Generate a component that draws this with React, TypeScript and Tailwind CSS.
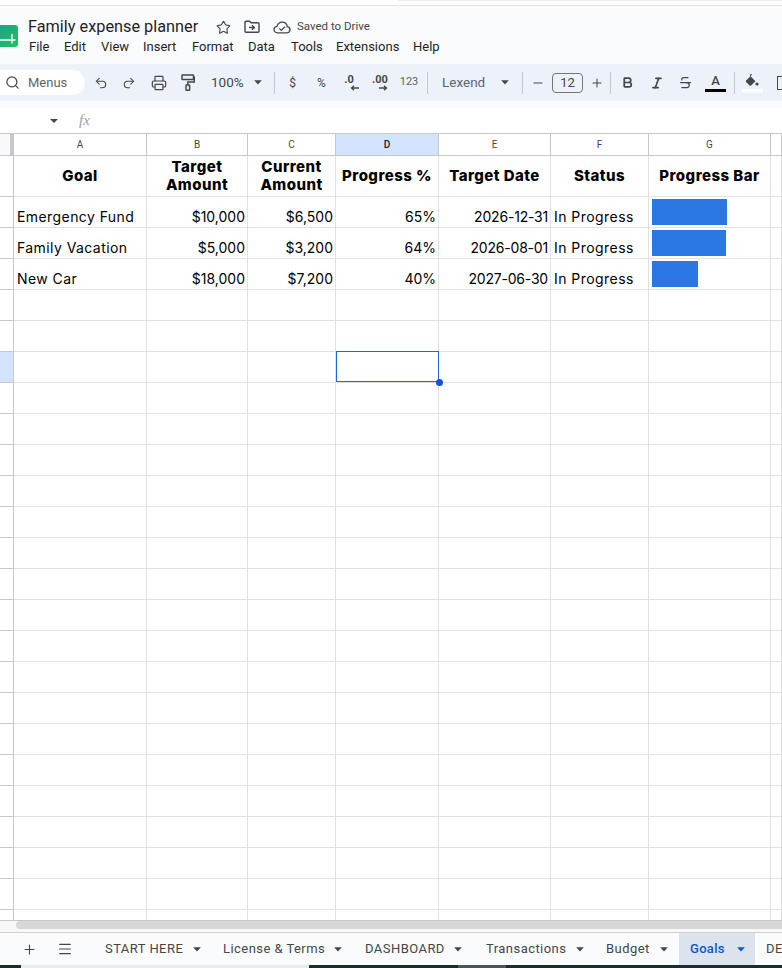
import React from "react";
import { Search, Undo2, Redo2, Printer, Star, Plus, Minus, Menu, Bold, Italic, Strikethrough } from "lucide-react";

const UI = "font-['Roboto','Liberation_Sans',sans-serif]";
const SHEET = "font-['Inter','Noto_Sans',sans-serif]";

const menus: [string, number][] = [
  ["File", 35], ["Edit", 37], ["View", 42], ["Insert", 49], ["Format", 56],
  ["Data", 43], ["Tools", 45], ["Extensions", 77], ["Help", 40],
];

const cols = "grid grid-cols-[14px_133px_101px_88px_103px_112px_98px_122px_1fr]";
const Caret = ({ c = "#444746" }: { c?: string }) => (
  <svg width="10" height="5" viewBox="0 0 10 5" className="shrink-0"><path d="M1.200 .3h7.600L5 4.500z" fill={c} /></svg>
);
const Sep = () => <div className="w-px h-[22px] bg-[#c7c7c7] shrink-0" />;
const Slot = ({ w, children, ml = 0 }: { w: number; children?: React.ReactNode; ml?: number }) => (
  <div className="flex items-center justify-center shrink-0 h-full" style={{ width: w, marginLeft: ml }}>{children}</div>
);

function Logo() {
  return (
    <svg width="18" height="22" viewBox="0 0 18 22" className="shrink-0">
      <defs>
        <linearGradient id="g" x1="0" y1="0" x2="1" y2="1">
          <stop offset="0" stopColor="#1f9f8f" />
          <stop offset="1" stopColor="#1fc25e" />
        </linearGradient>
      </defs>
      <path d="M-4 0H15a3 3 0 0 1 3 3V19a3 3 0 0 1-3 3H-4z" fill="url(#g)" />
      <path d="M0 15H15.500M12 9V18.500" stroke="#fff" strokeWidth="1.300" fill="none" />
    </svg>
  );
}

function MoveFolder() {
  return (
    <svg width="16" height="14" viewBox="0 0 16 14" fill="none" stroke="#444746" strokeWidth="1.400">
      <path d="M1 2.200c0-.6.4-1 1-1h3.600l1.500 1.600H14c.6 0 1 .4 1 1v7.400c0 .6-.4 1-1 1H2c-.6 0-1-.4-1-1z" />
      <path d="M5 7.500h5M8 5.200l2.400 2.300L8 9.800" />
    </svg>
  );
}

function CloudCheck() {
  return (
    <svg width="18" height="13" viewBox="0 0 18 13" fill="none" stroke="#444746" strokeWidth="1.300">
      <path d="M4.600 11.800C2.400 11.800 1 10.400 1 8.600c0-1.700 1.300-3 3-3.200C4.800 3 6.800 1.200 9.200 1.200c2.700 0 4.700 2 5 4.400 1.600.2 2.800 1.400 2.800 3 0 1.800-1.400 3.200-3.200 3.200z" />
      <path d="M6.300 7.400l2 2 3.700-3.700" />
    </svg>
  );
}

function Roller() {
  return (
    <svg width="14" height="17" viewBox="0 0 14 17" fill="none" stroke="#444746" strokeWidth="1.500">
      <rect x="1" y="1" width="11.500" height="4.500" rx=".6" />
      <path d="M12.500 3.200H13.300V8H6.800V11" />
      <rect x="5" y="11" width="3.600" height="5.200" rx=".5" />
    </svg>
  );
}

function Fill() {
  return (
    <svg width="21" height="20" viewBox="0 0 21 20" className="shrink-0">
      <path d="M6 .8l1 1-1.500 1.500 5 5-4.500 4.200c-.4.4-1 .4-1.400 0L1.100 9c-.4-.4-.4-1 0-1.400L5 3.800 4.900 2z" fill="#444746" transform="translate(3 0)" />
      <circle cx="15" cy="11" r="1.600" fill="#444746" />
      <rect x="0" y="16" width="21" height="3.500" fill="#fff" />
    </svg>
  );
}

const Dec = ({ label, dir }: { label: string; dir: "l" | "r" }) => (
  <div className="relative flex flex-col items-center font-bold text-[11px] leading-none text-[#444746]">
    <span className="-mt-[6px]">{label}</span>
    <svg width="10" height="6" viewBox="0 0 10 6" className={"absolute top-[5px] " + (dir === "l" ? "left-[6px]" : "right-[0px]")} fill="none" stroke="#444746" strokeWidth="1.300">
      {dir === "l" ? <path d="M9 3H1.500M4 .8 1.500 3 4 5.200" /> : <path d="M1 3h7.500M6 .8 8.500 3 6 5.200" />}
    </svg>
  </div>
);

function Toolbar() {
  const txt = "text-[#444746]";
  return (
    <div className={`mt-[8px] h-[37px] bg-[#edf2fa] flex items-center overflow-hidden ${UI}`}>
      <div className="h-[25px] w-[85px] bg-white rounded-r-full flex items-center shrink-0 pl-[5px]">
        <Search size={15} color="#444746" strokeWidth={2} />
        <span className="ml-[8px] text-[13px] text-[#5f6368]">Menus</span>
      </div>
      <Slot w={28} ml={2}><Undo2 size={14} color="#444746" strokeWidth={1.800} /></Slot>
      <Slot w={28}><Redo2 size={14} color="#444746" strokeWidth={1.800} /></Slot>
      <Slot w={32}><Printer size={16} color="#444746" strokeWidth={1.800} /></Slot>
      <Slot w={26}><Roller /></Slot>
      <div className={`ml-[10px] w-[36px] shrink-0 text-[13.500px] ${txt}`}>100%</div>
      <Slot w={14} ml={4}><Caret /></Slot>
      <div className="w-[9px] shrink-0" />
      <Sep />
      <Slot w={35}><span className={`text-[12px] ${txt}`}>$</span></Slot>
      <Slot w={23}><span className={`text-[12px] ${txt}`}>%</span></Slot>
      <Slot w={32}><Dec label=".0" dir="l" /></Slot>
      <Slot w={30}><Dec label=".00" dir="r" /></Slot>
      <Slot w={28}><span className={`text-[11px] text-[#5f6368]`}>123</span></Slot>
      <div className="w-[4px] shrink-0" />
      <Sep />
      <div className={`ml-[14px] w-[50px] shrink-0 text-[13.500px] text-[#5f6368]`}>Lexend</div>
      <Slot w={14} ml={6}><Caret /></Slot>
      <div className="w-[10px] shrink-0" />
      <Sep />
      <Slot w={29}><Minus size={14} color="#444746" strokeWidth={1.800} /></Slot>
      <div className={`w-[31px] h-[20px] shrink-0 rounded-[4px] border border-[#747775] flex items-center justify-center text-[13px] ${txt}`}>12</div>
      <Slot w={27}><Plus size={14} color="#444746" strokeWidth={1.800} /></Slot>
      <Sep />
      <Slot w={32}><Bold size={13} color="#444746" strokeWidth={3.200} /></Slot>
      <Slot w={27}><Italic size={14} color="#444746" strokeWidth={2.800} /></Slot>
      <Slot w={30}><Strikethrough size={15} color="#444746" strokeWidth={2} /></Slot>
      <div className="w-[21px] ml-[5px] shrink-0 flex flex-col items-center">
        <span className="text-[13px] font-medium text-[#444746] leading-[15px]">A</span>
        <div className="w-[21px] h-[3px] bg-black mt-[1px]" />
      </div>
      <div className="w-[8px] shrink-0" />
      <Sep />
      <div className="w-[7px] shrink-0" />
      <Fill />
      <div className="ml-[14px] w-[12px] h-[14px] border border-[#444746] shrink-0" />
    </div>
  );
}

function Header() {
  return (
    <div className={`h-[102px] bg-[#f9fbfd] ${UI} overflow-hidden shrink-0`}>
      <div className="flex pt-[19px]">
        <div className="w-[28px] shrink-0"><Logo /></div>
        <div className="flex-1 -mt-[9px]">
          <div className="flex items-center h-[22px]">
            <span className="text-[16.300px] text-[#1f1f1f] w-[188px] shrink-0">Family expense planner</span>
            <Star size={15} color="#444746" strokeWidth={1.800} className="shrink-0" />
            <div className="ml-[13px] shrink-0 flex"><MoveFolder /></div>
            <div className="ml-[13px] shrink-0 flex"><CloudCheck /></div>
            <span className="ml-[6px] text-[11.500px] text-[#444746]">Saved to Drive</span>
          </div>
          <div className="flex h-[18px] items-center">
            {menus.map(([m, w]) => (
              <span key={m} style={{ width: w }} className="shrink-0 text-[13px] text-[#1f1f1f] pl-[1px]">{m}</span>
            ))}
          </div>
        </div>
      </div>
      <Toolbar />
    </div>
  );
}

const colHeads = ["A", "B", "C", "D", "E", "F", "G", ""];

function ColHeaders() {
  return (
    <div className={`${cols} h-[23px] border-t border-b border-[#c7c7c7] ${UI} bg-white shrink-0`}>
      <div className="bg-[#f8f9fa] border-r-[4px] border-[#c7c7c7]" />
      {colHeads.map((c) => (
        <div key={c} className={`flex items-center justify-center text-[10px] border-r border-[#c7c7c7] ${c === "D" ? "bg-[#d3e3fd] text-[#0b1f3a] font-medium" : "text-[#444746]"}`}>{c}</div>
      ))}
    </div>
  );
}

type R = { a: string; b: string; c: string; d: string; e: string; f: string; bar: number };
const rows: R[] = [
  { a: "Emergency Fund", b: "$10,000", c: "$6,500", d: "65%", e: "2026-12-31", f: "In Progress", bar: 75 },
  { a: "Family Vacation", b: "$5,000", c: "$3,200", d: "64%", e: "2026-08-01", f: "In Progress", bar: 74 },
  { a: "New Car", b: "$18,000", c: "$7,200", d: "40%", e: "2027-06-30", f: "In Progress", bar: 46 },
];

const cell = "border-r border-b border-[#e1e1e1]";
const RowHead = ({ active }: { active?: boolean }) => (
  <div className={`border-r border-b border-[#c7c7c7] ${active ? "bg-[#d3e3fd]" : "bg-white"}`} />
);
const titles: [string, string?][] = [["Goal"], ["Target", "Amount"], ["Current", "Amount"], ["Progress %"], ["Target Date"], ["Status"], ["Progress Bar"]];

function HeadRow() {
  return (
    <div className={`${cols} h-[41px] shrink-0 ${SHEET}`}>
      <RowHead />
      {titles.map(([a, b]) => (
        <div key={a} className={`${cell} flex flex-col items-center justify-center text-[15px] font-extrabold tracking-[0.45px] leading-[18px] text-black whitespace-nowrap`}>
          <span>{a}</span>
          {b && <span>{b}</span>}
        </div>
      ))}
      <div className={cell} />
    </div>
  );
}

function DataRow({ r }: { r: R }) {
  const t = "flex items-end text-[14px] leading-[20px] text-black whitespace-nowrap";
  return (
    <div className={`${cols} h-[31px] ${SHEET}`}>
      <RowHead />
      <div className={`${cell} ${t} pl-[3px] tracking-[0.42px]`}>{r.a}</div>
      <div className={`${cell} ${t} justify-end pr-[2px]`}>{r.b}</div>
      <div className={`${cell} ${t} justify-end pr-[2px]`}>{r.c}</div>
      <div className={`${cell} ${t} justify-end pr-[2px]`}>{r.d}</div>
      <div className={`${cell} ${t} justify-end pr-[2px] tracking-[-0.2px]`}>{r.e}</div>
      <div className={`${cell} ${t} pl-[3px] tracking-[0.45px]`}>{r.f}</div>
      <div className={`${cell} pl-[3px] pt-[2px]`}>
        <div className="h-[26px] bg-[#2b78e4]" style={{ width: r.bar }} />
      </div>
      <div className={cell} />
    </div>
  );
}

function EmptyRow({ active }: { active?: boolean }) {
  return (
    <div className={`${cols} h-[31px]`}>
      <RowHead active={active} />
      {colHeads.map((c) => (
        <div key={c} className={`${cell} relative`}>
          {active && c === "D" && (
            <>
              <div className="absolute z-10 left-0 -top-px w-[103px] h-[31px] border border-[#1a66e0]" />
              <div className="absolute z-10 -right-[5px] -bottom-[4px] w-[7px] h-[7px] rounded-full bg-[#0b57d0]" />
            </>
          )}
        </div>
      ))}
    </div>
  );
}

const tabs = [
  { t: "START HERE", x: 0, w: 77, cx: 10 },
  { t: "License & Terms", x: 21, w: 101, cx: 9 },
  { t: "DASHBOARD", x: 22, w: 80, cx: 8 },
  { t: "Transactions", x: 23, w: 80, cx: 9 },
  { t: "Budget", x: 21, w: 45, cx: 8 },
];

function Tabs() {
  return (
    <div className={`h-[33px] bg-[#f9fbfd] border-t border-[#d0d0d0] flex items-center overflow-hidden shrink-0 ${UI}`}>
      <Slot w={30} ml={14}><Plus size={15} color="#444746" strokeWidth={1.800} /></Slot>
      <Slot w={30} ml={6}><Menu size={16} color="#444746" strokeWidth={1.800} /></Slot>
      <div className="w-[25px] shrink-0" />
      {tabs.map((t) => (
        <div key={t.t} className="flex items-center shrink-0" style={{ marginLeft: t.x }}>
          <span className="text-[13px] tracking-[0.45px] text-[#444746] whitespace-nowrap" style={{ width: t.w }}>{t.t}</span>
          <div className="flex" style={{ marginLeft: t.cx }}><Caret /></div>
        </div>
      ))}
      <div className="ml-[10px] w-[76px] h-full bg-[#dce3ec] flex items-center shrink-0 pl-[11px]">
        <span className="text-[13px] font-medium tracking-[0.3px] text-[#0b57d0] w-[37px]">Goals</span>
        <div className="ml-[9px] flex"><Caret c="#0b57d0" /></div>
      </div>
      <span className="ml-[11px] text-[13px] tracking-[0.45px] text-[#444746]">DE</span>
    </div>
  );
}

function Taskbar() {
  return (
    <div className="h-[3px] bg-[#1c2b2e] flex shrink-0">
      <div className="ml-[21px] w-[288px] bg-[#e8eaed]" />
      <div className="ml-[149px] w-[48px] bg-[#4a5658]" />
    </div>
  );
}

export default function App() {
  return (
    <div className="w-[782px] h-[968px] bg-white overflow-hidden flex flex-col">
      <div className="h-[6px] border-b border-[#e3e3e3] bg-white shrink-0 relative">
        <div className="absolute left-[398px] right-0 top-0 h-px bg-[#eeeeee]" />
      </div>
      <Header />
      <div className={`h-[25px] bg-white flex items-center shrink-0 ${UI}`}>
        <div className="ml-[50px] flex"><svg width="8" height="4" viewBox="0 0 8 4"><path d="M0 0h8L4 4z" fill="#444746" /></svg></div>
        <span className="ml-[21px] text-[15px] italic font-['Liberation_Serif',serif] text-[#9aa0a6]">fx</span>
      </div>
      <ColHeaders />
      <HeadRow />
      <div className="flex-1 overflow-hidden">
        {rows.map((r) => <DataRow key={r.a} r={r} />)}
        <EmptyRow />
        <EmptyRow />
        <EmptyRow active />
        {Array.from({ length: 17 }).map((_, i) => <EmptyRow key={i} />)}
        <div className={`${cols} h-[20px]`}>
          <RowHead />
          {colHeads.map((c) => <div key={c} className="border-r border-[#e1e1e1]" />)}
        </div>
      </div>
      <div className="h-[12px] shrink-0 bg-[#f8f8f8] border-t border-[#c7c7c7] pl-[16px]">
        <div className="h-[8px] bg-[#d7d7d7] rounded-l-full" />
      </div>
      <Tabs />
      <Taskbar />
    </div>
  );
}
